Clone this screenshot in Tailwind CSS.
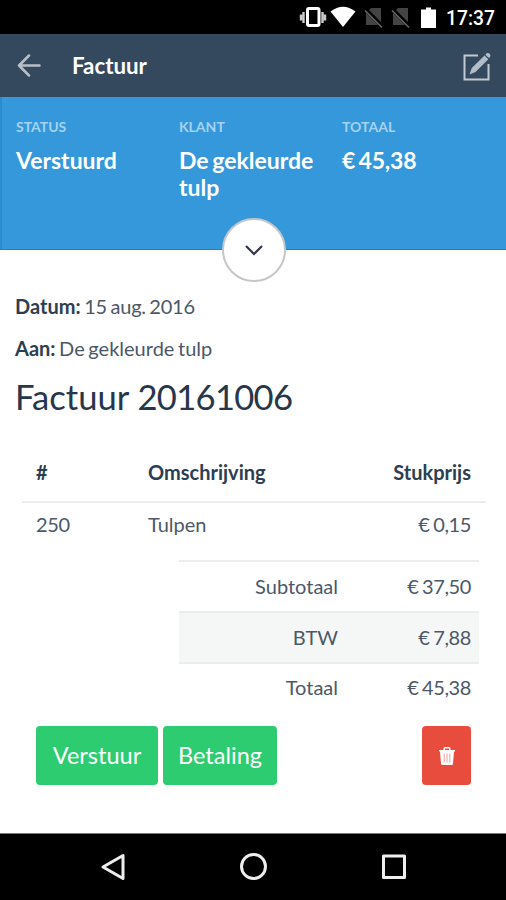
<!DOCTYPE html>
<html lang="nl">
<head>
<meta charset="utf-8">
<title>Factuur</title>
<script src="https://cdn.jsdelivr.net/npm/@tailwindcss/browser@4"></script>
</head>
<body class="bg-white">
<div class="flex h-[900px] w-[506px] flex-col overflow-hidden bg-white font-['Lato',sans-serif] text-[20px] text-[#4b5868]">
  <div class="flex h-[34px] shrink-0 items-center justify-end bg-black pr-[11px]">
    <svg class="h-[34px] w-[148px]" viewBox="298 0 148 34">
      <path d="M301 14.500v6M303.500 12v11M322.500 12v11M325 14.500v6" stroke="#ccc" stroke-width="2.400" fill="none"/>
      <rect x="307.500" y="8.500" width="11.500" height="17" rx="1.500" stroke="#fff" stroke-width="3" fill="#000"/>
      <path d="M330.500 11.500Q343 2 355.500 11.500L343 27Z" fill="#fff"/>
      <path d="M371 8h10v17h-15V13ZM398 8h10v17h-15V13Z" fill="#444"/>
      <path d="M365.500 9.500l17 17M392.500 9.500l17 17" stroke="#000" stroke-width="4"/>
      <path d="M365 10.500l17 17M392 10.500l17 17" stroke="#666" stroke-width="1.600"/>
      <path d="M426 7.500h5v2h5v18.500h-15V9.500h5Z" fill="#fff"/>
    </svg>
    <span class="w-[49px] whitespace-nowrap pt-[3px] font-['Roboto',sans-serif] text-[19.300px] font-medium leading-[20px] text-white">17:37</span>
  </div>
  <header class="flex h-[63px] shrink-0 items-center bg-[#34495e] pl-[17px] pr-[14px]">
    <svg class="h-6 w-6" viewBox="0 0 24 24" fill="none" stroke="#b8bfc7" stroke-width="2.500" stroke-linecap="round" stroke-linejoin="round"><path d="M22.500 11.500H2M12 1.500L2 11.500l10 10"/></svg>
    <h1 class="ml-[31px] flex-1 text-[22.300px] font-bold text-white">Factuur</h1>
    <svg class="h-[30px] w-[30px]" viewBox="0 0 30 30" fill="none"><path d="M16 4.500H2.500v24H26.500V13" stroke="#c2c9d0" stroke-width="2"/><path d="M7.500 23.500l2.300-6.500L22.500 4.500l3.800 3.800L13.500 21Z" fill="#b3bdc9"/><path d="M23.300 3.700l1.400-1.400q1.500-1 2.900.5t.5 2.900l-1.200 1.300Z" fill="#b3bdc9"/></svg>
  </header>
  <section class="relative grid h-[153px] shrink-0 grid-cols-[163px_163px_1fr] border-b border-l-2 border-b-[#1b83c6] border-l-[#2b8bcb] bg-[#3498db] pl-[14px] pt-[21px] text-[23px] font-bold leading-[27px] text-white [word-spacing:-2px]">
    <div><div class="mb-[12px] text-[14px] leading-[17px] text-[#a5d2f1]">STATUS</div>Verstuurd</div>
    <div><div class="mb-[12px] text-[14px] leading-[17px] text-[#a5d2f1]">KLANT</div>De gekleurde<br>tulp</div>
    <div><div class="mb-[12px] text-[14px] leading-[17px] text-[#a5d2f1]">TOTAAL</div><span class="tracking-[-0.200px]">€ 45,38</span></div>
    <button class="absolute left-[220px] top-[121px] flex h-[64px] w-[64px] items-center justify-center rounded-full border-2 border-[#c4c7c9] bg-white">
      <svg class="h-[12px] w-[20px]" viewBox="0 0 20 12" fill="none" stroke="#32344b" stroke-width="2.200"><path d="M2 2l8 8 8-8"/></svg>
    </button>
  </section>
  <main class="flex flex-1 flex-col">
    <div class="px-[15px] pt-[44px] [word-spacing:-1.500px]">
      <p class="mb-[18px] leading-[24px]"><b class="font-bold text-[#2c3e50]">Datum:</b> <span class="tracking-[-0.200px]">15 aug. 2016</span></p>
      <p class="leading-[24px]"><b class="font-bold text-[#2c3e50]">Aan:</b> De gekleurde tulp</p>
      <h2 class="mt-[16px] text-[34.600px] leading-[42px] text-[#27364b] [word-spacing:0px]">Factuur <span class="tracking-[-0.700px]">20161006</span></h2>
    </div>
    <div class="ml-[22px] mr-[20px] mt-[25px]">
      <div class="grid h-[60px] grid-cols-[112px_1fr_auto] items-center border-b-2 border-[#ebeef0] pb-[1px] pl-[14px] pr-[15px] font-bold text-[#2c3e50]">
        <span>#</span><span>Omschrijving</span><span>Stukprijs</span>
      </div>
      <div class="grid h-[57px] grid-cols-[112px_1fr_auto] items-center pb-[15px] pl-[14px] pr-[15px]">
        <span class="tracking-[-0.300px]">250</span><span>Tulpen</span><span class="tracking-[-0.400px] [word-spacing:-1px]">€ 0,15</span>
      </div>
    </div>
    <div class="ml-[179px] mr-[27px] text-right">
      <div class="grid h-[51px] grid-cols-[159px_1fr] items-center border-t-2 border-[#ebeef0] pb-[2px] pr-[8px]"><span>Subtotaal</span><span class="tracking-[-0.400px] [word-spacing:-1px]">€ 37,50</span></div>
      <div class="grid h-[51px] grid-cols-[159px_1fr] items-center border-t-2 border-[#ebeef0] bg-[#f5f7f7] pb-[2px] pr-[8px]"><span>BTW</span><span class="tracking-[-0.400px] [word-spacing:-1px]">€ 7,88</span></div>
      <div class="grid h-[51px] grid-cols-[159px_1fr] items-center border-t-2 border-[#ebeef0] pb-[3px] pr-[8px]"><span>Totaal</span><span class="tracking-[-0.400px] [word-spacing:-1px]">€ 45,38</span></div>
    </div>
    <div class="ml-[36px] mr-[35px] mt-[13px] flex h-[59px] text-[23.500px] text-white">
      <button class="mr-[5px] w-[122px] rounded-[4px] bg-[#2ecc71]">Verstuur</button>
      <button class="w-[114px] rounded-[4px] bg-[#2ecc71]">Betaling</button>
      <button class="ml-auto flex w-[49px] items-center justify-center rounded-[4px] bg-[#e74c3c]">
        <svg class="h-[20px] w-[18px]" viewBox="0 0 18 20"><path d="M1 5.500V4h4.500V2.500Q5.500 1 7 1h4q1.500 0 1.500 1.500V4H17v1.500h-1L15 17.500Q15 19 13.500 19h-9Q3 19 3 17.500L2 5.500ZM7 2.500V4h4V2.500Z" fill="#fff" fill-rule="evenodd"/><path d="M6.200 7.500v9M9 7.500v9M11.800 7.500v9" stroke="#efa29a"/></svg>
      </button>
    </div>
  </main>
  <nav class="flex h-[67px] shrink-0 items-center justify-between border-t border-[#777] bg-black pl-[100px] pr-[98px]">
    <svg class="h-7 w-7" viewBox="0 0 28 28" fill="none" stroke="#eee" stroke-width="3" stroke-linejoin="round"><path d="M23 2.500v23L3 14Z"/></svg>
    <svg class="h-7 w-7" viewBox="0 0 28 28" fill="none" stroke="#eee" stroke-width="3"><circle cx="13.500" cy="13.500" r="12"/></svg>
    <svg class="h-7 w-7" viewBox="0 0 28 28" fill="none" stroke="#eee" stroke-width="3" stroke-linejoin="round"><rect x="3.500" y="3" width="21" height="21.500"/></svg>
  </nav>
</div>
</body>
</html>
